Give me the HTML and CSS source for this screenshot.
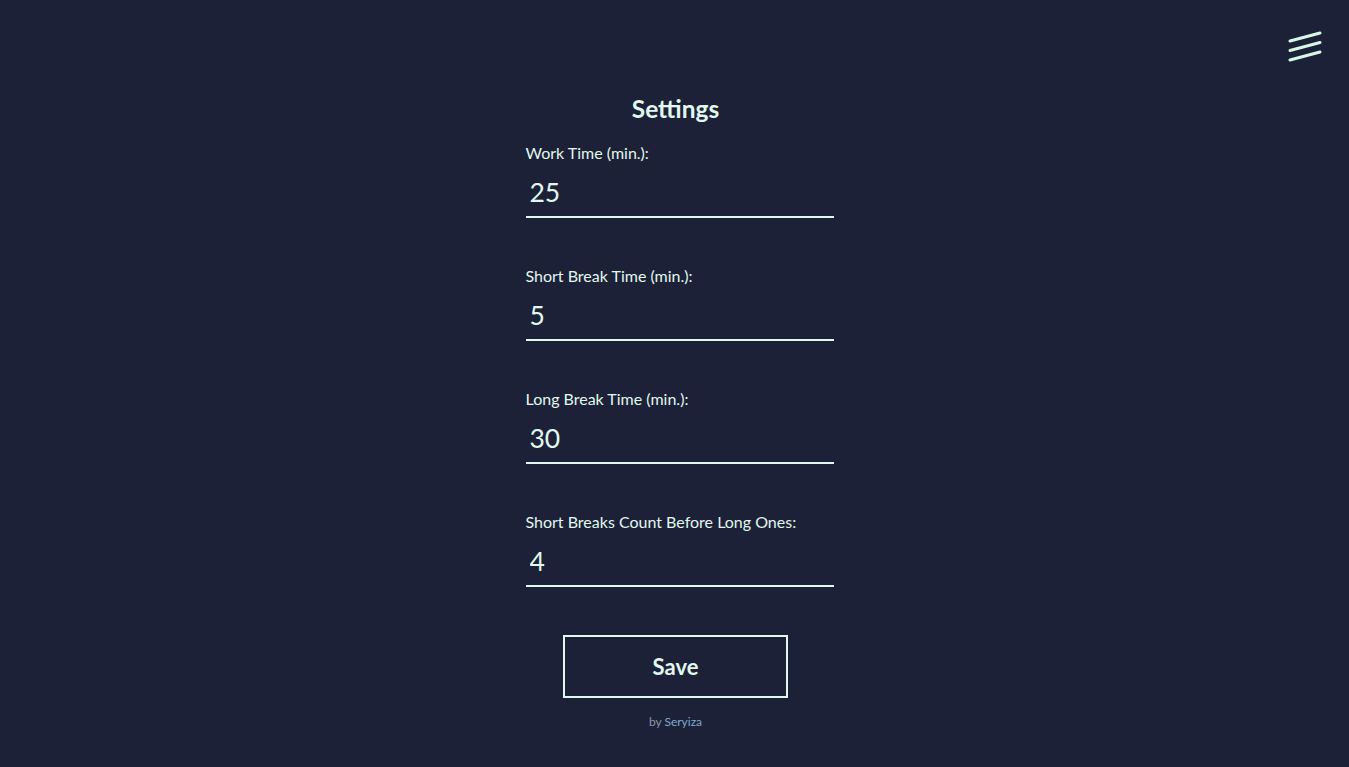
FILE: index.html
```html
<!DOCTYPE html>
<html lang="en">
<head>
<meta charset="utf-8">
<title>Settings</title>
<link rel="stylesheet" href="styles.css">
</head>
<body>
<button class="menu" aria-label="Menu">
  <svg width="36" height="36" viewBox="0 0 36 36">
    <g stroke="#d8f7e8" stroke-width="3" stroke-linecap="round">
      <line x1="3" y1="14" x2="33" y2="6"/>
      <line x1="3" y1="23.5" x2="33" y2="15.5"/>
      <line x1="3" y1="33" x2="33" y2="25"/>
    </g>
  </svg>
</button>
<main class="page">
  <h1 class="title">Settings</h1>
  <form class="form">
    <div class="field">
      <label class="label">Work Time (min.):</label>
      <input class="input" type="text" value="25">
    </div>
    <div class="field">
      <label class="label">Short Break Time (min.):</label>
      <input class="input" type="text" value="5">
    </div>
    <div class="field">
      <label class="label">Long Break Time (min.):</label>
      <input class="input" type="text" value="30">
    </div>
    <div class="field">
      <label class="label">Short Breaks Count Before Long Ones:</label>
      <input class="input" type="text" value="4">
    </div>
  </form>
  <button class="save" type="button">Save</button>
  <p class="credit">by <a href="#" class="credit-link">Seryiza</a></p>
</main>
</body>
</html>
```
FILE: styles.css
```css
html, body {
  margin: 0;
  padding: 0;
  background: #1c2137;
  height: 100%;
}
body {
  font-family: Lato, "Open Sans", sans-serif;
  color: #e0f8ef;
}
.menu {
  position: absolute;
  top: 27px;
  right: 26px;
  background: none;
  border: 0;
  padding: 0;
  width: 36px;
  height: 36px;
  cursor: pointer;
}
.menu svg { display: block; }
.page {
  display: flex;
  flex-direction: column;
  align-items: center;
  padding: 94px 0 0 2px;
}
.title {
  margin: 0;
  font-size: 24.5px;
  line-height: 30px;
  font-weight: 700;
}
.form {
  width: 300px;
  margin-top: 19px;
  display: flex;
  flex-direction: column;
  gap: 48px;
}
.field {
  display: flex;
  flex-direction: column;
}
.label {
  font-size: 16px;
  line-height: 20px;
}
.input {
  box-sizing: border-box;
  width: 308px;
  height: 55px;
  padding: 5px 4px 0;
  margin: 0;
  background: transparent;
  border: 0;
  border-bottom: 2px solid #e0f8ef;
  color: #e0f8ef;
  font-family: Lato, "Open Sans", sans-serif;
  font-size: 26.5px;
  outline: none;
}
.save {
  margin-top: 48px;
  width: 225px;
  height: 63px;
  background: transparent;
  border: 2px solid #e0f8ef;
  color: #e0f8ef;
  font-family: Lato, "Open Sans", sans-serif;
  font-size: 22px;
  font-weight: 700;
  cursor: pointer;
}
.credit {
  margin: 16px 0 0;
  font-size: 12px;
  line-height: 15px;
  color: #8d98a8;
}
.credit-link {
  color: #80a9cc;
  text-decoration: none;
}
```
